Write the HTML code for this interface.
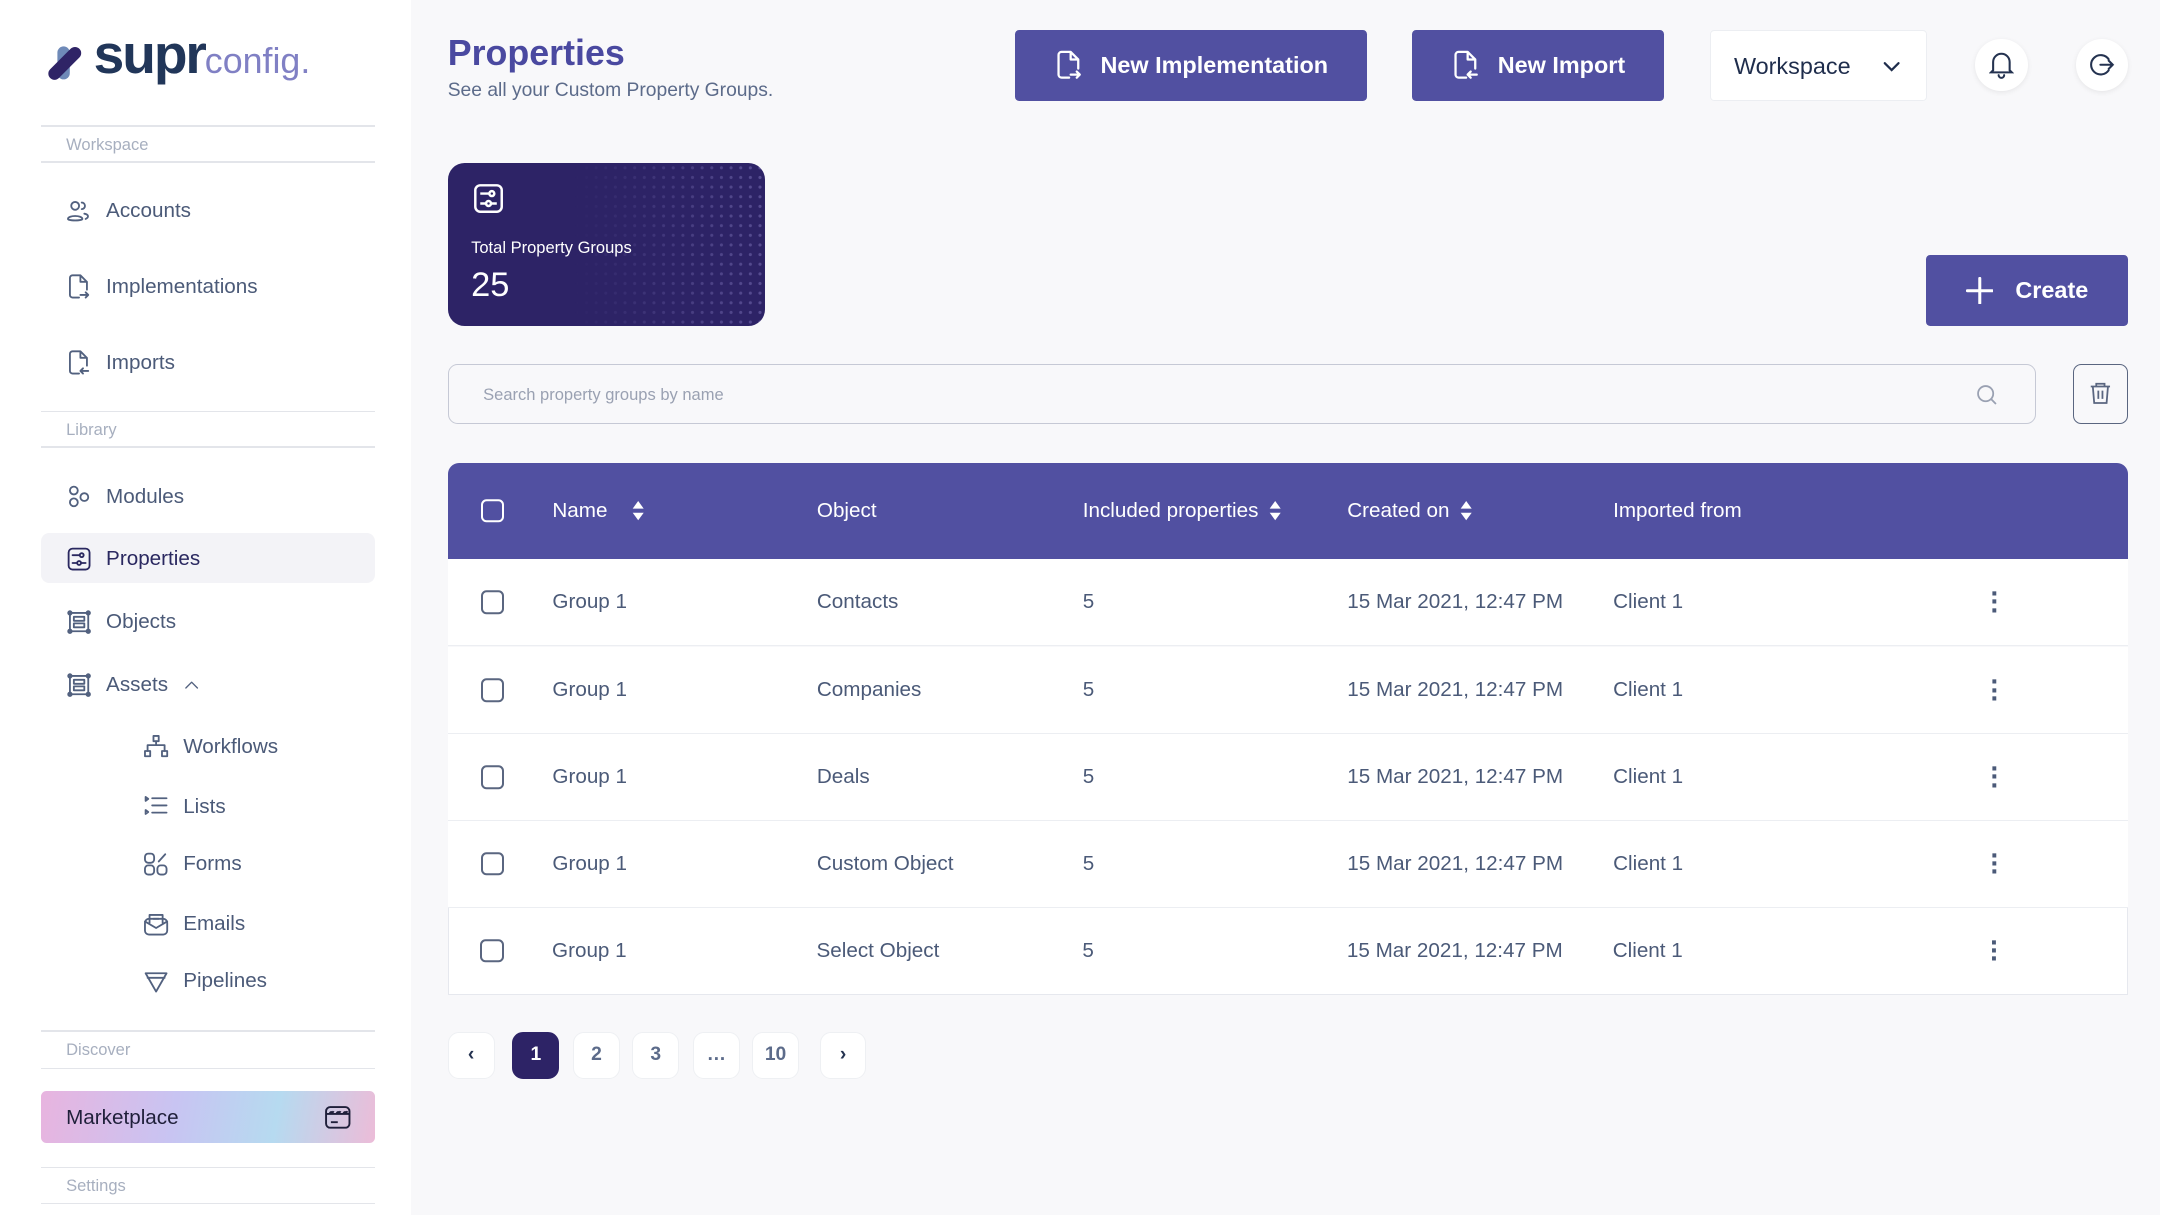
<!DOCTYPE html>
<html><head><meta charset="utf-8"><style>
*{box-sizing:border-box;margin:0;padding:0}
html,body{width:2160px;height:1215px;overflow:hidden;background:#f8f8fa}
#root{zoom:1.37755;width:1568px;height:882px;position:relative;font-family:"Liberation Sans",sans-serif;color:#4b5a78}
.a{position:absolute}
.side{left:0;top:0;width:298px;height:882px;background:#fff}
.ln{left:30px;width:242px;height:1px;background:#e3e5ea}
.lab{left:48px;font-size:12px;color:#a7afbf}
.it{font-size:15px;color:#4b5a78;display:flex;align-items:center;gap:10px}
.it svg{width:19px;height:19px;fill:none;stroke:#52617f;stroke-width:1.4;stroke-linecap:round;stroke-linejoin:round}
.btn{background:#5150a1;color:#fff;border-radius:3px;display:flex;align-items:center;justify-content:center;gap:12px;font-size:17px;font-weight:bold}
.btn svg{fill:none;stroke:#fff;stroke-width:1.5;stroke-linecap:round;stroke-linejoin:round}
.circ{width:38px;height:38px;border-radius:50%;background:#fff;box-shadow:0 1px 4px rgba(0,0,0,.08);display:flex;align-items:center;justify-content:center}
.circ svg{fill:none;stroke:#243250;stroke-width:1.5;stroke-linecap:round}
.cb{width:17px;height:17px;border:1.5px solid #5a6680;border-radius:4px}
.row{left:325px;width:1220px;height:63px;background:#fff;border-bottom:1px solid #eceef2;font-size:15px;color:#4b5a78}
.row span{position:absolute;top:50%;transform:translateY(-50%)}
.th{position:absolute;top:50%;transform:translateY(-50%);color:#fff;font-size:15px;display:flex;align-items:center;gap:8px}
.th svg{width:9px;height:14px}
.pg{top:749px;width:34px;height:34px;background:#fff;border:1px solid #eef0f3;border-radius:8px;display:flex;align-items:center;justify-content:center;font-size:14px;color:#5c6b8a;font-weight:bold}
</style></head><body><div id="root">
<div class="a side"></div>
<svg class="a" style="left:33px;top:33px" width="28" height="26" viewBox="0 0 28 26"><rect x="9" y="1" width="9" height="24" rx="4.5" fill="#6f8ab8"/><rect x="10" y="-2" width="9" height="30" rx="4.5" fill="#2f2466" transform="rotate(45 14 13)"/></svg>
<div class="a" style="left:68px;top:16px;font-size:40px;font-weight:bold;color:#213659;letter-spacing:-1.5px">supr<span style="font-size:26px;font-weight:normal;color:#8080c4;letter-spacing:0">config.</span></div>

<div class="a ln" style="top:91px"></div><div class="a lab" style="top:98px">Workspace</div><div class="a ln" style="top:117px"></div>
<div class="a it" style="left:48px;top:144px"><svg viewBox="0 0 20 20"><circle cx="7" cy="6" r="3"/><path d="M1.5 16c0-3 11-3 11 0c0 1.5-11 1.5-11 0zM12 3.5a2.5 2.5 0 1 1 0 5M14 12c3 .5 4 2.5 1 4"/></svg>Accounts</div>
<div class="a it" style="left:48px;top:199px"><svg viewBox="0 0 20 20"><path d="M10 18H5a2 2 0 0 1-2-2V3a2 2 0 0 1 2-2h6l5 5v6M11 1v5h5M11 16h6m-2-2l2 2-2 2"/></svg>Implementations</div>
<div class="a it" style="left:48px;top:254px"><svg viewBox="0 0 20 20"><path d="M10 18H5a2 2 0 0 1-2-2V3a2 2 0 0 1 2-2h6l5 5v6M11 1v5h5M17 16h-6m2-2l-2 2 2 2"/></svg>Imports</div>
<div class="a ln" style="top:298px"></div><div class="a lab" style="top:305px">Library</div><div class="a ln" style="top:324px"></div>
<div class="a it" style="left:48px;top:351px"><svg viewBox="0 0 20 20"><circle cx="6" cy="5" r="3"/><circle cx="6" cy="14" r="3"/><circle cx="14" cy="10" r="3"/></svg>Modules</div>
<div class="a" style="left:30px;top:387px;width:242px;height:36px;background:#f3f3f7;border-radius:6px"></div>
<div class="a it" style="left:48px;top:396px;color:#2a2860"><svg viewBox="0 0 20 20" style="stroke:#2a2860"><rect x="2" y="2" width="16" height="16" rx="3"/><path d="M5 7h5M5 13h3M12 13h3"/><circle cx="12" cy="7" r="1.5"/><circle cx="10" cy="13" r="1.5"/></svg>Properties</div>
<div class="a it" style="left:48px;top:442px"><svg viewBox="0 0 20 20"><rect x="3" y="3" width="14" height="14"/><rect x="6" y="6" width="8" height="3"/><rect x="6" y="11" width="8" height="3"/><circle cx="3" cy="3" r="1.3"/><circle cx="17" cy="3" r="1.3"/><circle cx="3" cy="17" r="1.3"/><circle cx="17" cy="17" r="1.3"/></svg>Objects</div>
<div class="a it" style="left:48px;top:488px"><svg viewBox="0 0 20 20"><rect x="3" y="3" width="14" height="14"/><rect x="6" y="6" width="8" height="3"/><rect x="6" y="11" width="8" height="3"/><circle cx="3" cy="3" r="1.3"/><circle cx="17" cy="3" r="1.3"/><circle cx="3" cy="17" r="1.3"/><circle cx="17" cy="17" r="1.3"/></svg>Assets<svg viewBox="0 0 20 20" style="width:14px"><path d="M4 13l6-6 6 6"/></svg></div>
<div class="a it" style="left:104px;top:533px"><svg viewBox="0 0 20 20"><rect x="8" y="1.5" width="4" height="4"/><rect x="1.5" y="13" width="4" height="4"/><rect x="14.5" y="13" width="4" height="4"/><path d="M10 5.5v3M3.5 13v-4.5h13V13"/></svg>Workflows</div>
<div class="a it" style="left:104px;top:576px"><svg viewBox="0 0 20 20"><path d="M2 3l2 1.5L2 6zM2 13l2 1.5L2 16zM7 4h11M7 9.5h11M7 15h11"/></svg>Lists</div>
<div class="a it" style="left:104px;top:618px"><svg viewBox="0 0 20 20"><rect x="1.5" y="2" width="7" height="7" rx="2.5"/><rect x="1.5" y="11" width="7" height="7" rx="2.5"/><rect x="11" y="11" width="7" height="7" rx="2.5"/><path d="M12 8l5-5.5"/></svg>Forms</div>
<div class="a it" style="left:104px;top:661px"><svg viewBox="0 0 20 20"><rect x="1.5" y="6" width="17" height="12" rx="3"/><path d="M1.5 8l8.5 5 8.5-5M5 9V3h10v6M8 6h4"/></svg>Emails</div>
<div class="a it" style="left:104px;top:703px"><svg viewBox="0 0 20 20"><path d="M2 4h16l-8 14zM3.5 7.5h13"/></svg>Pipelines</div>
<div class="a ln" style="top:748px"></div><div class="a lab" style="top:755px">Discover</div><div class="a ln" style="top:775px"></div>
<div class="a" style="left:30px;top:792px;width:242px;height:38px;border-radius:4px;background:linear-gradient(100deg,#e8b4df 0%,#c8c4f2 40%,#b6daf0 70%,#ecbcd8 100%);font-size:15px;color:#1f1f3a;padding:11px 0 0 18px">Marketplace
<svg style="position:absolute;right:17px;top:10px" width="20" height="18" viewBox="0 0 20 18" fill="none" stroke="#1f1f3a" stroke-width="1.4"><rect x="1.5" y="1.5" width="17" height="15" rx="3"/><path d="M1.5 6.5h17M4 6.5c1-3 2 0 3-2M9 6.5c1-3 2 0 3-2M14 6.5c1-3 2 0 3-2M5 12.5h5"/></svg></div>
<div class="a ln" style="top:847px"></div><div class="a lab" style="top:854px">Settings</div><div class="a ln" style="top:873px"></div>

<div class="a" style="left:325px;top:24px;font-size:26px;font-weight:bold;color:#4a49a0">Properties</div>
<div class="a" style="left:325px;top:58px;font-size:14px;color:#5c6b8a">See all your Custom Property Groups.</div>
<div class="a btn" style="left:737px;top:22px;width:255px;height:51px"><svg width="22" height="24" viewBox="0 0 20 20"><path d="M10 18H5a2 2 0 0 1-2-2V3a2 2 0 0 1 2-2h6l5 5v6M11 1v5h5M11 16h6m-2-2l2 2-2 2"/></svg>New Implementation</div>
<div class="a btn" style="left:1025px;top:22px;width:183px;height:51px"><svg width="22" height="24" viewBox="0 0 20 20"><path d="M10 18H5a2 2 0 0 1-2-2V3a2 2 0 0 1 2-2h6l5 5v6M11 1v5h5M17 16h-6m2-2l-2 2 2 2"/></svg>New Import</div>
<div class="a" style="left:1241px;top:22px;width:158px;height:51px;background:#fff;border:1px solid #eceef2;border-radius:3px;font-size:17px;color:#1f2d4c;padding:16px 0 0 17px">Workspace<svg style="position:absolute;right:18px;top:19px" width="14" height="14" viewBox="0 0 14 14" fill="none" stroke="#1f2d4c" stroke-width="1.6" stroke-linecap="round"><path d="M2 4.5l5 5 5-5"/></svg></div>
<div class="a circ" style="left:1434px;top:28px"><svg width="18" height="20" viewBox="0 0 18 20"><path d="M3 14V8a6 6 0 0 1 12 0v6l1.5 1.5h-15zM7 17.5a2 2 0 0 0 4 0"/></svg></div>
<div class="a circ" style="left:1507px;top:28px"><svg width="20" height="20" viewBox="0 0 20 20"><path d="M15 6a7 7 0 1 0 0 8M9 10h9m-3-3l3 3-3 3"/></svg></div>

<div class="a" style="left:325px;top:118px;width:230px;height:119px;border-radius:12px;background:#2d2366;overflow:hidden">
<div style="position:absolute;left:90px;top:0;width:140px;height:119px;background-image:radial-gradient(circle,rgba(140,130,200,.45) 1px,transparent 1.3px);background-size:7px 7px;-webkit-mask-image:linear-gradient(90deg,transparent,#000)"></div>
<svg style="position:absolute;left:18px;top:14px" width="24" height="24" viewBox="0 0 20 20" fill="none" stroke="#fff" stroke-width="1.5"><rect x="2" y="2" width="16" height="16" rx="3"/><path d="M5 7h5M5 13h3M12 13h3"/><circle cx="12" cy="7" r="1.5"/><circle cx="10" cy="13" r="1.5"/></svg>
<div style="position:absolute;left:17px;top:55px;font-size:12px;color:#fff">Total Property Groups</div>
<div style="position:absolute;left:17px;top:75px;font-size:25px;color:#fff">25</div></div>
<div class="a btn" style="left:1398px;top:185px;width:147px;height:52px;gap:16px"><svg width="20" height="20" viewBox="0 0 20 20" style="stroke-width:2.2"><path d="M10 1v18M1 10h18"/></svg>Create</div>

<div class="a" style="left:325px;top:264px;width:1153px;height:44px;border:1px solid #c6c9d5;border-radius:7px;font-size:12px;color:#9aa1b2;padding:15px 0 0 25px">Search property groups by name
<svg style="position:absolute;right:27px;top:14px" width="16" height="16" viewBox="0 0 16 16" fill="none" stroke="#9aa1b2" stroke-width="1.3"><circle cx="7" cy="7" r="5.5"/><path d="M11 11l3.5 3.5"/></svg></div>
<div class="a" style="left:1505px;top:264px;width:40px;height:44px;border:1.3px solid #5a6680;border-radius:6px"><svg style="position:absolute;left:10px;top:12px" width="18" height="18" viewBox="0 0 18 18" fill="none" stroke="#5a6680" stroke-width="1.3"><path d="M2 4h14M6 4V2h6v2M3.5 4l1 12h9l1-12M7.5 7v6M10.5 7v6"/></svg></div>

<div class="a" style="left:325px;top:336px;width:1220px;height:70px;background:#5150a1;border-radius:8px 8px 0 0">
<div class="th" style="left:24px"><div class="cb" style="border-color:#fff"></div></div>
<div class="th" style="left:76px">Name <svg viewBox="0 0 9 14" style="margin-left:10px"><path d="M4.5 0L8.5 5.5H0.5zM4.5 14L8.5 8.5H0.5z" fill="#fff"/></svg></div>
<div class="th" style="left:268px">Object</div>
<div class="th" style="left:461px">Included properties <svg viewBox="0 0 9 14"><path d="M4.5 0L8.5 5.5H0.5zM4.5 14L8.5 8.5H0.5z" fill="#fff"/></svg></div>
<div class="th" style="left:653px">Created on <svg viewBox="0 0 9 14"><path d="M4.5 0L8.5 5.5H0.5zM4.5 14L8.5 8.5H0.5z" fill="#fff"/></svg></div>
<div class="th" style="left:846px">Imported from</div></div>

<div class="a row" style="top:406px"><span style="left:24px" class="cb"></span><span style="left:76px">Group 1</span><span style="left:268px">Contacts</span><span style="left:461px">5</span><span style="left:653px">15 Mar 2021, 12:47 PM</span><span style="left:846px">Client 1</span><span style="left:1120px;font-size:20px;font-weight:bold;line-height:6px">·<br>·<br>·</span></div>
<div class="a row" style="top:470px"><span style="left:24px" class="cb"></span><span style="left:76px">Group 1</span><span style="left:268px">Companies</span><span style="left:461px">5</span><span style="left:653px">15 Mar 2021, 12:47 PM</span><span style="left:846px">Client 1</span><span style="left:1120px;font-size:20px;font-weight:bold;line-height:6px">·<br>·<br>·</span></div>
<div class="a row" style="top:533px"><span style="left:24px" class="cb"></span><span style="left:76px">Group 1</span><span style="left:268px">Deals</span><span style="left:461px">5</span><span style="left:653px">15 Mar 2021, 12:47 PM</span><span style="left:846px">Client 1</span><span style="left:1120px;font-size:20px;font-weight:bold;line-height:6px">·<br>·<br>·</span></div>
<div class="a row" style="top:596px"><span style="left:24px" class="cb"></span><span style="left:76px">Group 1</span><span style="left:268px">Custom Object</span><span style="left:461px">5</span><span style="left:653px">15 Mar 2021, 12:47 PM</span><span style="left:846px">Client 1</span><span style="left:1120px;font-size:20px;font-weight:bold;line-height:6px">·<br>·<br>·</span></div>
<div class="a row" style="top:659px;border:1px solid #e6e8ee;border-top:none"><span style="left:23px" class="cb"></span><span style="left:75px">Group 1</span><span style="left:267px">Select Object</span><span style="left:460px">5</span><span style="left:652px">15 Mar 2021, 12:47 PM</span><span style="left:845px">Client 1</span><span style="left:1119px;font-size:20px;font-weight:bold;line-height:6px">·<br>·<br>·</span></div>

<div class="a pg" style="left:325px;color:#243250">‹</div>
<div class="a pg" style="left:372px;background:#2d2366;color:#fff;border-color:#2d2366">1</div>
<div class="a pg" style="left:416px">2</div>
<div class="a pg" style="left:459px">3</div>
<div class="a pg" style="left:503px">…</div>
<div class="a pg" style="left:546px">10</div>
<div class="a pg" style="left:595px;color:#243250">›</div>
</div></body></html>
